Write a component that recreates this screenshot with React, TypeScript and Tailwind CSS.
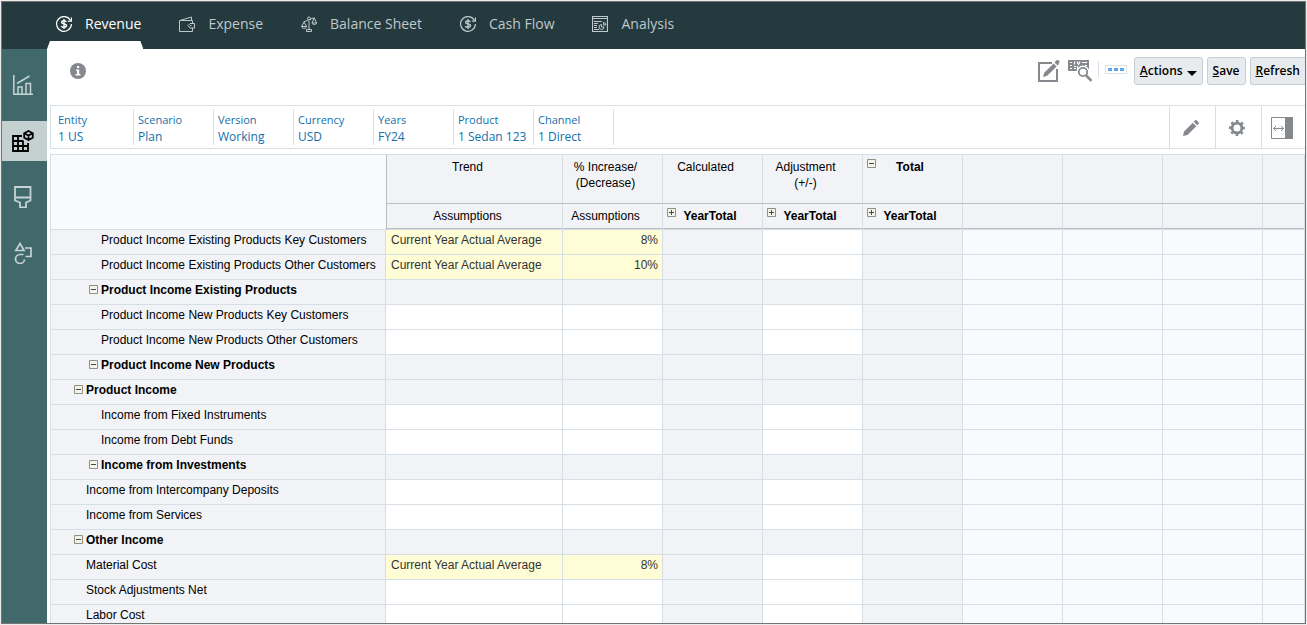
import React, { useState } from "react";
import clsx from "clsx";

interface IconProps {
  className?: string;
}

const CashIcon: React.FC<IconProps> = ({ className }) => (
  <svg className={className} viewBox="0 0 16 16" fill="none" stroke="currentColor">
    <path d="M14.6 4.6A7.4 7.4 0 1 0 15.4 8" strokeWidth="1.2" />
    <path d="M15.4 1.6v3.600h-3.600" strokeWidth="1.2" />
    <path d="M10.4 5.900C10 5 9.100 4.700 8 4.700c-1.400 0-2.400.6-2.400 1.600 0 2.400 5 1 5 3.300 0 1.100-1.100 1.700-2.600 1.700-1.300 0-2.300-.4-2.700-1.400M8 3v10" strokeWidth="1.400" />
  </svg>
);

const WalletIcon: React.FC<IconProps> = ({ className }) => (
  <svg className={className} viewBox="0 0 16 16" fill="none" stroke="currentColor">
    <path d="M13.500 7.500V4.500H.5v11h13V12" />
    <path d="M1.500 4.300 12.500 1v3.300" />
    <path d="M15.500 7.500H11L9 9.500 11 12h4.500z" />
    <path d="M11 9.500h1.500" />
  </svg>
);

const ScalesIcon: React.FC<IconProps> = ({ className }) => (
  <svg className={className} viewBox="0 0 16 16" fill="none" stroke="currentColor">
    <path d="M2.500 6 8 3.600l5.500-1.900" />
    <circle cx="8" cy="2.500" r="1.500" />
    <path d="M8 5v8M5.500 13.500h5v2h-5z" />
    <path d="M3 6 .6 10.500h5zM.6 10.500c.2 2.400 4.800 2.400 5 0" />
    <path d="m13.300 2-2.300 5h4.600zM11 7c.2 2 4.400 2 4.600 0" />
  </svg>
);

const ReportIcon: React.FC<IconProps> = ({ className }) => (
  <svg className={className} viewBox="0 0 16 16" fill="none" stroke="currentColor">
    <path d="M.5.5h15v15H.5z" strokeWidth="1.200" />
    <path d="M.5 2.500h15M2 5.500h8M2 7.500h4M2 9.500h3M2 11.500h3M2 13.500h5" />
    <path d="M9.500 8.500a2.500 2.500 0 1 0 2.500 2.500H9.500zM11.500 6.500V9H14a2.500 2.500 0 0 0-2.500-2.500z" />
  </svg>
);

const ChartIcon: React.FC<IconProps> = ({ className }) => (
  <svg className={className} viewBox="0 0 20 20" fill="none" stroke="currentColor" strokeWidth="1.500">
    <path d="M.8 0v19.200H20" />
    <path d="M5 19v-7h4v7M13 19V8.500h4.500V19" />
    <path d="M4 8.500 16.500 1" />
  </svg>
);

const GridCubeIcon: React.FC<IconProps> = ({ className }) => (
  <svg className={className} viewBox="0 0 22 22" fill="none" stroke="currentColor" strokeWidth="1.800">
    <path d="M10 6H1v15h15v-8M1 11h10.500M1 16h15M6 6v15M11 11v10" />
    <path d="m16.500 1 4.300 2.300v4.400L16.500 10 12.200 7.700V3.300zM12.200 3.300l4.300 2.300 4.300-2.300M16.500 5.600V10" />
  </svg>
);

const BrushIcon: React.FC<IconProps> = ({ className }) => (
  <svg className={className} viewBox="0 0 18 22" fill="none" stroke="currentColor" strokeWidth="1.800">
    <path d="M1 1h15.500v13.500l-4.500 2v5H6v-5l-5-2zM1 11.500h15.500" />
  </svg>
);

const ShapesIcon: React.FC<IconProps> = ({ className }) => (
  <svg className={className} viewBox="0 0 18 22" fill="none" stroke="currentColor" strokeWidth="1.700">
    <path d="M6 1.500 10 8.500H1.800z" />
    <path d="M11 6h6v8.500h-5.500" />
    <path d="M9.500 12.500H6a4.500 4.500 0 1 0 4.500 5" />
  </svg>
);

const EditFormIcon: React.FC<IconProps> = ({ className }) => (
  <svg className={className} viewBox="0 0 22 22" fill="currentColor">
    <path d="M0 2h14v2H2v16h16V9h2v13H0z" />
    <path d="m5 17 1.200-4.200L15.600 3.400l3 3L9.200 15.800zM16.500 2.500l1.300-1.300L20.800 4.200 19.500 5.500z" />
    <circle cx="19.500" cy="2" r="2" />
  </svg>
);

const InspectIcon: React.FC<IconProps> = ({ className }) => (
  <svg className={className} viewBox="0 0 25 22">
    <path d="M0 0h21v11H0z" fill="currentColor" />
    <path d="M2 2.500h2M6.500 1.500v3M9 1.500l1.500 3 1.500-3M14 2.500h5M2 5.500h2M6 6.500h2M9.500 6v3M2 8.500h2M6 8.500h2M17 5.500h2" stroke="#fff" strokeWidth="1.200" fill="none" />
    <circle cx="15" cy="12" r="4.500" fill="#fff" stroke="#fff" strokeWidth="4" />
    <circle cx="15" cy="12" r="4.200" fill="#fff" stroke="currentColor" strokeWidth="1.800" />
    <path d="m18.200 15.500 5.300 5.300" stroke="currentColor" strokeWidth="2.600" />
  </svg>
);

const PencilIcon: React.FC<IconProps> = ({ className }) => (
  <svg className={className} viewBox="0 0 16 16" fill="currentColor">
    <path d="m0 16 1-4.500L9.800 2.700l3.500 3.500L4.500 15zM10.700 1.800l1.500-1.500c.4-.4 1-.4 1.400 0l2.100 2.100c.4.4.4 1 0 1.400l-1.500 1.500z" />
  </svg>
);

const GearIcon: React.FC<IconProps> = ({ className }) => (
  <svg className={className} viewBox="0 0 16 16" fill="none" stroke="currentColor">
    <circle cx="8" cy="8" r="4.900" strokeWidth="2.800" />
    <circle cx="8" cy="8" r="6.900" strokeWidth="2.200" strokeDasharray="2.700 2.719" strokeDashoffset="1.350" />
  </svg>
);

const PanelIcon: React.FC<IconProps> = ({ className }) => (
  <svg className={className} viewBox="0 0 22 22" fill="none" stroke="currentColor">
    <path d="M.5.5h21v21H.5z" />
    <path d="M14 0h8v22h-8z" fill="currentColor" stroke="none" />
    <path d="M2.500 11.500h10M5 9l-2.500 2.500L5 14M10 9l2.500 2.500L10 14" />
  </svg>
);

const InfoIcon: React.FC<IconProps> = ({ className }) => (
  <svg className={className} viewBox="0 0 16 16">
    <circle cx="8" cy="8" r="8" fill="currentColor" />
    <path d="M7 3h2.200v2H7zM6 6.500h3.200V11H10.500v1.500h-5V11H7V8H6z" fill="#fff" />
  </svg>
);

const TABS = [
  { label: "Revenue", Icon: CashIcon },
  { label: "Expense", Icon: WalletIcon },
  { label: "Balance Sheet", Icon: ScalesIcon },
  { label: "Cash Flow", Icon: CashIcon },
  { label: "Analysis", Icon: ReportIcon },
];

const SIDE_ITEMS = [
  { label: "Dashboards", Icon: ChartIcon, size: "w-5 h-5" },
  { label: "Data entry", Icon: GridCubeIcon, size: "w-[22px] h-[22px]" },
  { label: "Format", Icon: BrushIcon, size: "w-[18px] h-[22px]" },
  { label: "Drivers", Icon: ShapesIcon, size: "w-[18px] h-[22px]" },
];

const POV = [
  ["Entity", "1 US"],
  ["Scenario", "Plan"],
  ["Version", "Working"],
  ["Currency", "USD"],
  ["Years", "FY24"],
  ["Product", "1 Sedan 123"],
  ["Channel", "1 Direct"],
];

interface Row {
  label: string;
  level: 1 | 2;
  parent?: boolean;
  trend?: string;
  pct?: string;
}

const AVERAGE = "Current Year Actual Average";

const ROWS: Row[] = [
  { label: "Product Income Existing Products Key Customers", level: 2, trend: AVERAGE, pct: "8%" },
  { label: "Product Income Existing Products Other Customers", level: 2, trend: AVERAGE, pct: "10%" },
  { label: "Product Income Existing Products", level: 2, parent: true },
  { label: "Product Income New Products Key Customers", level: 2 },
  { label: "Product Income New Products Other Customers", level: 2 },
  { label: "Product Income New Products", level: 2, parent: true },
  { label: "Product Income", level: 1, parent: true },
  { label: "Income from Fixed Instruments", level: 2 },
  { label: "Income from Debt Funds", level: 2 },
  { label: "Income from Investments", level: 2, parent: true },
  { label: "Income from Intercompany Deposits", level: 1 },
  { label: "Income from Services", level: 1 },
  { label: "Other Income", level: 1, parent: true },
  { label: "Material Cost", level: 1, trend: AVERAGE, pct: "8%" },
  { label: "Stock Adjustments Net", level: 1 },
  { label: "Labor Cost", level: 1 },
];

const SPARE_COLUMNS = [0, 1, 2, 3];

const Expander: React.FC<{ open?: boolean; name: string }> = ({ open, name }) => (
  <button
    type="button"
    aria-label={`${open ? "Collapse" : "Expand"} ${name}`}
    className="block shrink-0 w-[9px] h-[9px] text-[#4a4a44]"
  >
    <svg className="block w-[9px] h-[9px]" viewBox="0 0 9 9" fill="none" stroke="currentColor">
      <path d="M.5.5h8v8h-8z" fill="#f4f4ea" stroke="#8f9183" />
      <path d={open ? "M2 4.500h5" : "M2 4.500h5M4.500 2v5"} />
    </svg>
  </button>
);

const TopHeader: React.FC<{ lines: string[] }> = ({ lines }) => (
  <th scope="col" className="h-[49px] align-top pt-1 pr-3.5 font-normal leading-4 bg-[#f1f3f7] border-r border-r-[#d6dfe6] border-b border-b-[#b9bec1]">
    {lines.map((line) => (
      <div key={line}>{line}</div>
    ))}
  </th>
);

const YearTotalHeader: React.FC = () => (
  <th scope="col" className="h-[26px] align-top pt-1 pl-1 pr-[18px] font-bold leading-4 bg-[#f1f3f7] border-r border-b border-[#d6dfe6] shadow-[inset_0_-1px_0_#b9bec1]">
    <div className="flex">
      <Expander name="YearTotal" />
      <span className="flex-1">YearTotal</span>
    </div>
  </th>
);

const DataCell: React.FC<{ tone: string; children?: React.ReactNode; className?: string }> = ({ tone, children, className }) => (
  <td className={clsx("h-[25px] pl-[5px] pr-1 pb-1 leading-4 text-[#333] border-r border-b border-[#d6dfe6]", tone, className)}>{children}</td>
);

const DataGrid: React.FC = () => (
  <div className="flex-1 min-h-0 overflow-hidden mt-[5px] ml-[3px] border-t border-l border-[#d6dfe6]">
    <table className="w-full table-fixed border-separate border-spacing-0 font-['Liberation_Sans',Arial,sans-serif] text-xs text-black">
      <colgroup>
        <col className="w-[335px]" />
        <col className="w-[177px]" />
        {[0, 1, 2, 3, 4, 5, 6].map((i) => (
          <col key={i} className="w-[100px]" />
        ))}
        <col />
      </colgroup>
      <thead>
        <tr>
          <td rowSpan={2} className="bg-[#f8fafd] border-b border-[#d6dfe6]" />
          <th scope="col" className="h-[49px] align-top pt-1 pr-3.5 font-normal leading-4 bg-[#f1f3f7] border-l border-l-[#b9bec1] border-r border-r-[#d6dfe6] border-b border-b-[#b9bec1]">
            Trend
          </th>
          <TopHeader lines={["% Increase/", "(Decrease)"]} />
          <TopHeader lines={["Calculated"]} />
          <TopHeader lines={["Adjustment", "(+/-)"]} />
          <th scope="col" className="h-[49px] align-top pt-1 pl-1 pr-[18px] font-bold leading-4 bg-[#f1f3f7] border-r border-r-[#d6dfe6] border-b border-b-[#b9bec1]">
            <div className="flex">
              <Expander open name="Total" />
              <span className="flex-1">Total</span>
            </div>
          </th>
          {SPARE_COLUMNS.map((i) => (
            <TopHeader key={i} lines={[]} />
          ))}
        </tr>
        <tr>
          <th scope="col" className="h-[26px] align-top pt-1 pr-3.5 font-normal leading-4 bg-[#f1f3f7] border-l border-l-[#b9bec1] border-r border-r-[#d6dfe6] border-b border-b-[#d6dfe6] shadow-[inset_0_-1px_0_#b9bec1]">
            Assumptions
          </th>
          <th scope="col" className="h-[26px] align-top pt-1 pr-3.5 font-normal leading-4 bg-[#f1f3f7] border-r border-b border-[#d6dfe6] shadow-[inset_0_-1px_0_#b9bec1]">
            Assumptions
          </th>
          <YearTotalHeader />
          <YearTotalHeader />
          <YearTotalHeader />
          {SPARE_COLUMNS.map((i) => (
            <th key={i} className="bg-[#f1f3f7] border-r border-b border-[#d6dfe6] shadow-[inset_0_-1px_0_#b9bec1]" />
          ))}
        </tr>
      </thead>
      <tbody>
        {ROWS.map((row) => {
          const open = row.parent ? "bg-[#f1f3f7]" : "bg-white";
          const driver = row.trend ? "bg-[#fffdd6]" : open;
          return (
            <tr key={row.label}>
              <th
                scope="row"
                className={clsx(
                  "h-[25px] pb-1 text-left leading-4 whitespace-nowrap bg-[#f1f3f7] border-r border-b border-[#d6dfe6]",
                  row.level === 2 ? "pl-[38px]" : "pl-[23px]",
                  row.parent ? "font-bold" : "font-normal"
                )}
              >
                <div className="flex items-center">
                  <span className="w-3 shrink-0 pb-px">{row.parent && <Expander open name={row.label} />}</span>
                  {row.label}
                </div>
              </th>
              <DataCell tone={driver}>{row.trend}</DataCell>
              <DataCell tone={driver} className="text-right">{row.pct}</DataCell>
              <DataCell tone="bg-[#f1f3f7]" />
              <DataCell tone={open} />
              <DataCell tone="bg-[#f1f3f7]" />
              {SPARE_COLUMNS.map((i) => (
                <DataCell key={i} tone="bg-[#f8fafd]" />
              ))}
            </tr>
          );
        })}
      </tbody>
    </table>
  </div>
);

const toolButton = "h-7 px-[5px] bg-[#e7ebed] border border-[#c4ced7] rounded-[3px] text-xs font-semibold text-black whitespace-nowrap";

const App: React.FC = () => {
  const [activeTab, setActiveTab] = useState("Revenue");
  const [activeSide, setActiveSide] = useState("Data entry");

  return (
    <div className="h-screen p-px bg-[#ececec] font-['Open_Sans','Noto_Sans',sans-serif]">
      <div className="h-full flex flex-col overflow-hidden bg-white border border-[#747474]">
        <nav className="h-[47px] shrink-0 flex gap-[38px] pl-[54px] bg-[#243a3f]">
          {TABS.map(({ label, Icon }) => (
            <button
              key={label}
              type="button"
              onClick={() => setActiveTab(label)}
              className={clsx(
                "relative flex items-center gap-[13px] pb-1 text-sm whitespace-nowrap",
                label === activeTab ? "text-white" : "text-[#bfc8ca]"
              )}
            >
              <Icon className="w-4 h-4" />
              {label}
              {label === activeTab && (
                <span className="absolute bottom-0 -left-[9px] -right-0.5 h-2 bg-white [clip-path:polygon(3px_0,calc(100%-3px)_0,100%_100%,0_100%)]" />
              )}
            </button>
          ))}
        </nav>

        <div className="flex-1 min-h-0 flex">
          <aside className="w-[45px] shrink-0 flex flex-col gap-4 pt-4 bg-[#41696c]">
            {SIDE_ITEMS.map(({ label, Icon, size }) => (
              <button
                key={label}
                type="button"
                aria-label={label}
                onClick={() => setActiveSide(label)}
                className={clsx(
                  "h-10 flex items-center justify-center pr-[3px]",
                  label === activeSide ? "bg-[#c5d0d1] text-black" : "text-[#c5d3d4]"
                )}
              >
                <Icon className={size} />
              </button>
            ))}
          </aside>

          <main className="flex-1 min-w-0 flex flex-col">
            <div className="h-14 shrink-0 flex justify-between pl-[23px] pt-2">
              <InfoIcon className="w-4 h-4 mt-1.5 text-[#85898d]" />
              <div className="flex">
                <button type="button" aria-label="Edit form" className="w-[22px] h-7 text-[#85898d]">
                  <EditFormIcon className="w-[22px] h-[22px]" />
                </button>
                <button type="button" aria-label="Inspect data" className="w-[25px] h-7 ml-2 text-[#85898d]">
                  <InspectIcon className="w-[25px] h-[22px]" />
                </button>
                <div className="w-px h-4 mt-1 ml-[5px] bg-[#d6dfe6]" />
                <button type="button" aria-label="More" className="w-[22px] h-[9px] mt-2 ml-1.5 flex items-center justify-center gap-0.5 border border-[#dfe4e8]">
                  <span className="w-1 h-[3px] bg-[#5ba8ec]" />
                  <span className="w-1 h-[3px] bg-[#5ba8ec]" />
                  <span className="w-1 h-[3px] bg-[#5ba8ec]" />
                </button>
                <button type="button" className={clsx(toolButton, "ml-[7px] flex items-center gap-1")}>
                  <span><u>A</u>ctions</span>
                  <svg className="w-2.5 h-[5px] mt-1" viewBox="0 0 10 5"><path d="M0 0h10L5 5z" fill="currentColor" /></svg>
                </button>
                <button type="button" className={clsx(toolButton, "ml-1")}><u>S</u>ave</button>
                <button type="button" className={clsx(toolButton, "ml-1 border-r-0 rounded-r-none")}><u>R</u>efresh</button>
              </div>
            </div>

            <div className="h-11 shrink-0 ml-[3px] flex justify-between border-y border-l border-[#d6dfe6]">
              <div className="flex py-[3px] pl-[3px]">
                {POV.map(([name, member]) => (
                  <div key={name} className="w-20 pl-1 pt-0.5 border-r border-[#d6dfe6] text-[#146fa9] whitespace-nowrap">
                    <div className="text-[11px] leading-[17px]">{name}</div>
                    <a href="#" className="block text-xs leading-[17px]">{member}</a>
                  </div>
                ))}
              </div>
              <div className="flex text-[#85898d]">
                <button type="button" aria-label="Edit" className="w-[46px] flex items-center justify-center pr-[3px] pt-0.5 border-l border-[#d6dfe6]">
                  <PencilIcon className="w-4 h-4" />
                </button>
                <button type="button" aria-label="Settings" className="w-[46px] flex items-center justify-center pr-[3px] pt-0.5 border-l border-[#d6dfe6]">
                  <GearIcon className="w-4 h-4" />
                </button>
                <button type="button" aria-label="Toggle panel" className="w-11 flex items-center justify-center pr-[3px] pt-0.5 border-l border-[#d6dfe6]">
                  <PanelIcon className="w-[22px] h-[22px]" />
                </button>
              </div>
            </div>

            <DataGrid />
          </main>
        </div>
      </div>
    </div>
  );
};

export default App;
